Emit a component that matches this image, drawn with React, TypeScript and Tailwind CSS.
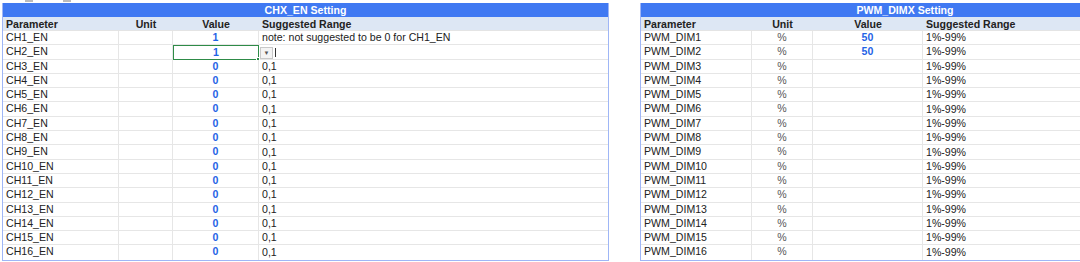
const chRows = Array.from({ length: 16 }, (_, i) => ({
  param: `CH${i + 1}_EN`,
  unit: "",
  value: i < 2 ? "1" : "0",
  range: i === 0 ? "note: not suggested to be 0 for CH1_EN" : i === 1 ? "" : "0,1",
}));

const pwmRows = Array.from({ length: 16 }, (_, i) => ({
  param: `PWM_DIM${i + 1}`,
  unit: "%",
  value: i < 2 ? "50" : "",
  range: "1%-99%",
}));

type Row = { param: string; unit: string; value: string; range: string };

function SheetTable({
  title,
  rows,
  cols,
  width,
  selected,
}: {
  title: string;
  rows: Row[];
  cols: string;
  width: string;
  selected?: boolean;
}) {
  return (
    <div className={`shrink-0 ${width} border-x border-b border-[#9fb6f6]`}>
      <div className="h-[14px] bg-[#4079f2] text-white font-bold text-center leading-[14px]">
        {title}
      </div>
      <div className={`grid ${cols} h-[14px] bg-[#dde7f4] font-bold leading-[14px] border-b border-[#e4e4e4]`}>
        <div className="pl-[3px]">Parameter</div>
        <div className="text-center">Unit</div>
        <div className="text-center">Value</div>
        <div className="pl-[3px]">Suggested Range</div>
      </div>
      {rows.map((r, i) => (
        <div
          key={r.param}
          className={`grid ${cols} h-[14.3px] leading-[13px] border-b border-[#e6e6e6] last:border-b-0`}
        >
          <div className="pl-[3px] border-r border-[#e6e6e6]">{r.param}</div>
          <div className="text-center text-[#555] border-r border-[#e6e6e6]">{r.unit}</div>
          <div
            className={`relative text-center font-bold text-[#1f63e6] border-r ${
              selected && i === 1 ? "border border-[#2e8b47]" : "border-[#e6e6e6]"
            }`}
          >
            {r.value}
            {selected && i === 1 && (
              <span className="absolute -right-[2px] -bottom-[2px] w-[4px] h-[4px] bg-[#2e8b47] border border-white" />
            )}
          </div>
          <div className="pl-[3px] flex items-center whitespace-nowrap">
            {selected && i === 1 ? (
              <>
                <span className="-ml-[2px] w-[13px] h-[12px] border border-[#c8c8c8] bg-[#f4f4f4] text-[6px] leading-[10px] text-center text-[#555]">
                  ▼
                </span>
                <span className="ml-[2px] w-px h-[9px] bg-[#333]" />
              </>
            ) : (
              r.range
            )}
          </div>
        </div>
      ))}
    </div>
  );
}

export default function App() {
  return (
    <div
      className="w-[1080px] h-[262px] overflow-hidden bg-white text-[10.6px] text-[#222]"
      style={{ fontFamily: '"Liberation Sans", Arial, sans-serif' }}
    >
      <div className="h-[3px] flex gap-[30px] pl-[25px] items-start">
        <span className="w-[8px] h-[2px] bg-[#bbb]" />
        <span className="w-[8px] h-[2px] bg-[#bbb]" />
      </div>
      <div className="flex items-start gap-[31px] pl-[2px]">
        <SheetTable
          title="CHX_EN Setting"
          rows={chRows}
          cols="grid-cols-[116px_54px_86px_1fr]"
          width="w-[607px]"
          selected
        />
        <SheetTable
          title="PWM_DIMX Setting"
          rows={pwmRows}
          cols="grid-cols-[111px_61px_110px_1fr]"
          width="w-[530px]"
        />
      </div>
    </div>
  );
}
